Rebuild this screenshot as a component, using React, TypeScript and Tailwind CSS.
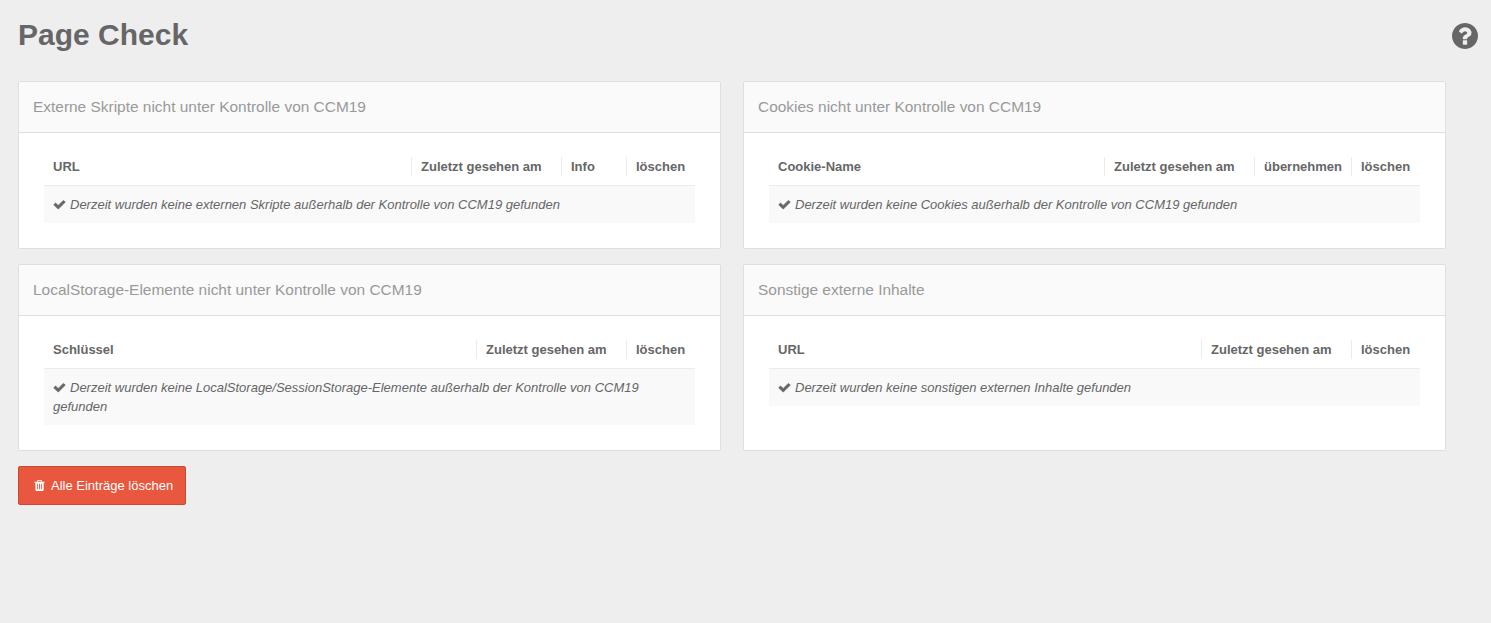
import React from "react";

type Column = { label: string; width?: string };
type PanelProps = { title: string; columns: Column[]; message: string };

function CheckIcon() {
  return (
    <svg
      viewBox="0 0 1792 1792"
      fill="currentColor"
      stroke="currentColor"
      strokeWidth="70"
      className="mr-1 inline-block size-[13px] align-[-2px]"
    >
      <path d="M1671 566q0 40-28 68l-724 724-136 136q-28 28-68 28t-68-28l-136-136-362-362q-28-28-28-68t28-68l136-136q28-28 68-28t68 28l294 295 656-657q28-28 68-28t68 28l136 136q28 28 28 68z" />
    </svg>
  );
}

function TrashIcon() {
  return (
    <svg viewBox="0 0 1792 1792" fill="currentColor" className="size-[13px]">
      <path d="M704 1376v-704q0-14-9-23t-23-9h-64q-14 0-23 9t-9 23v704q0 14 9 23t23 9h64q14 0 23-9t9-23zm256 0v-704q0-14-9-23t-23-9h-64q-14 0-23 9t-9 23v704q0 14 9 23t23 9h64q14 0 23-9t9-23zm256 0v-704q0-14-9-23t-23-9h-64q-14 0-23 9t-9 23v704q0 14 9 23t23 9h64q14 0 23-9t9-23zm-544-992h448l-48-117q-7-9-17-11h-317q-10 2-17 11zm928 32v64q0 14-9 23t-23 9h-96v948q0 83-47 143.500t-113 60.500h-832q-66 0-113-58.500t-47-141.500v-952h-96q-14 0-23-9t-9-23v-64q0-14 9-23t23-9h309l70-167q15-37 54-63t79-26h320q40 0 79 26t54 63l70 167h309q14 0 23 9t9 23z" />
    </svg>
  );
}

function HelpIcon() {
  return (
    <svg viewBox="128 128 1536 1536" fill="currentColor" className="size-[26px]">
      <path d="M1024 1376v-192q0-14-9-23t-23-9h-192q-14 0-23 9t-9 23v192q0 14 9 23t23 9h192q14 0 23-9t9-23zm256-672q0-88-55.500-163t-138.500-116-170-41q-243 0-371 213-15 24 8 42l132 100q7 6 19 6 16 0 25-12 53-68 86-92 34-24 86-24 48 0 85.500 26t37.500 59q0 38-20 61t-68 45q-63 28-115.500 86.500t-52.500 125.500v36q0 14 9 23t23 9h192q14 0 23-9t9-23q0-19 21.500-49.500t54.500-49.500q32-18 49-28.500t46-35 44.500-48 28-60.500 12.500-81zm384 192q0 209-103 385.500t-279.500 279.500-385.500 103-385.500-103-279.500-279.500-103-385.500 103-385.500 279.500-279.500 385.500-103 385.500 103 279.500 279.500 103 385.500z" />
    </svg>
  );
}

function Panel({ title, columns, message }: PanelProps) {
  return (
    <section className="flex flex-col rounded-[2px] border border-[#dfdfdf] bg-white">
      <h2 className="h-[51px] border-b border-[#dfdfdf] bg-[#fafafa] px-[14px] text-[15.44px] leading-[50px] text-[#999]">
        {title}
      </h2>
      <div className="px-[25px] pt-[24px] pb-[25px]">
        <div className="flex h-[29px] border-b border-[#ebebeb] text-[13px] leading-[20px] font-bold">
          {columns.map((c) => (
            <div
              key={c.label}
              className={
                c.width
                  ? `h-[19px] shrink-0 border-l border-[#ebebeb] pl-[9px] whitespace-nowrap ${c.width}`
                  : "h-[19px] flex-1 pl-[9px]"
              }
            >
              {c.label}
            </div>
          ))}
        </div>
        <p className="bg-[#f9f9f9] px-[9px] py-[9px] text-[13px] leading-[19px] italic">
          <CheckIcon />
          {message}
        </p>
      </div>
    </section>
  );
}

const panels: PanelProps[] = [
  {
    title: "Externe Skripte nicht unter Kontrolle von CCM19",
    columns: [
      { label: "URL" },
      { label: "Zuletzt gesehen am", width: "w-[150px]" },
      { label: "Info", width: "w-[65px]" },
      { label: "löschen", width: "w-[69px]" },
    ],
    message: "Derzeit wurden keine externen Skripte außerhalb der Kontrolle von CCM19 gefunden",
  },
  {
    title: "Cookies nicht unter Kontrolle von CCM19",
    columns: [
      { label: "Cookie-Name" },
      { label: "Zuletzt gesehen am", width: "w-[150px]" },
      { label: "übernehmen", width: "w-[97px]" },
      { label: "löschen", width: "w-[69px]" },
    ],
    message: "Derzeit wurden keine Cookies außerhalb der Kontrolle von CCM19 gefunden",
  },
  {
    title: "LocalStorage-Elemente nicht unter Kontrolle von CCM19",
    columns: [
      { label: "Schlüssel" },
      { label: "Zuletzt gesehen am", width: "w-[150px]" },
      { label: "löschen", width: "w-[69px]" },
    ],
    message:
      "Derzeit wurden keine LocalStorage/SessionStorage-Elemente außerhalb der Kontrolle von CCM19 gefunden",
  },
  {
    title: "Sonstige externe Inhalte",
    columns: [
      { label: "URL" },
      { label: "Zuletzt gesehen am", width: "w-[150px]" },
      { label: "löschen", width: "w-[69px]" },
    ],
    message: "Derzeit wurden keine sonstigen externen Inhalte gefunden",
  },
];

export default function App() {
  return (
    <div className="min-h-screen bg-[#eee] font-['Liberation_Sans',Arial,sans-serif] text-[#666]">
      <header className="flex h-[81px] items-start justify-between pr-[13px] pl-[18px]">
        <h1 className="pt-[16px] text-[30px] leading-[37px] font-bold">Page Check</h1>
        <button aria-label="Hilfe" className="mt-[23px]">
          <HelpIcon />
        </button>
      </header>
      <main className="pr-[45px] pl-[18px]">
        <div className="grid grid-cols-2 gap-x-[22px] gap-y-[15px]">
          {panels.map((p) => (
            <Panel key={p.title} {...p} />
          ))}
        </div>
        <button className="mt-[15px] flex h-[39px] w-[168px] items-center rounded-[2px] border border-[#c94a34] bg-[#e8573e] pl-[14px] text-[13px] text-white">
          <TrashIcon />
          <span className="ml-[5px]">Alle Einträge löschen</span>
        </button>
      </main>
    </div>
  );
}
